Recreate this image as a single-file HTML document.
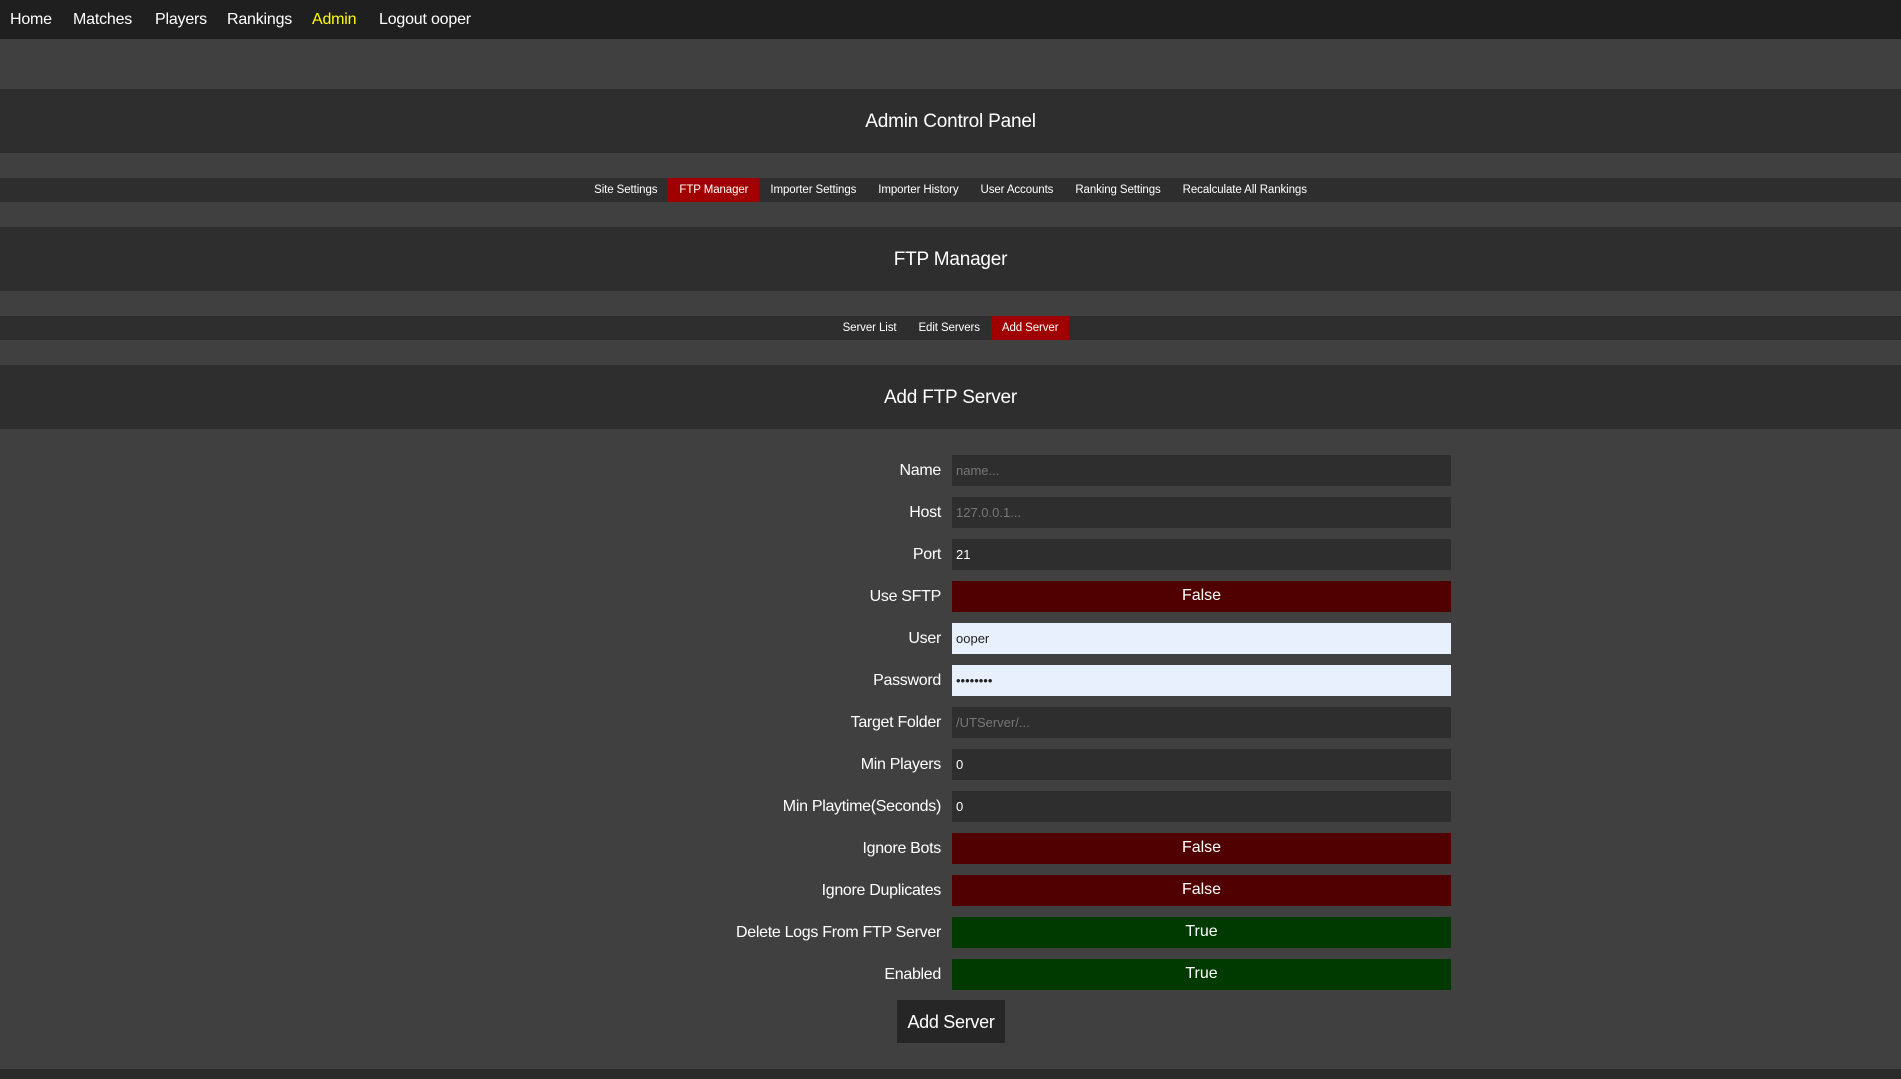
<!DOCTYPE html>
<html><head><meta charset="utf-8"><style>
*{margin:0;padding:0;box-sizing:border-box}
body{width:1901px;height:1079px;background:#404040;font-family:"Liberation Sans",Arial,sans-serif;color:#fff;overflow:hidden;position:relative}
.nav{height:39px;background:#1f1f1f;position:relative}
.nav span{position:absolute;top:11px;font-size:16px;letter-spacing:-0.2px}
.band{position:absolute;left:0;width:1901px;background:#2e2e2e;text-align:center}
.title{height:64px;line-height:66px;font-size:19px;letter-spacing:-0.2px}
.tabs{height:24px;line-height:25px;font-size:11.5px;letter-spacing:-0.1px}
.tabs span{display:inline-block;padding:0 11px;height:24px}
.tabs .on{background:#a00000}
.row{position:absolute;left:0;width:1901px;height:31px}
.lab{position:absolute;right:960px;top:7px;font-size:16px;letter-spacing:-0.3px}
.inp{position:absolute;left:952px;width:499px;height:31px;background:#2e2e2e;font-size:13px;line-height:31px;padding-left:4px;color:#fff}
.ph{color:#777}
.light{background:#e8f0fe;color:#222}
.red{background:#500000;text-align:center;font-size:16px;padding:0;line-height:29px}
.green{background:#003a00;text-align:center;font-size:16px;padding:0;line-height:29px}
.btn{position:absolute;left:897px;top:1000px;width:108px;height:43px;background:#262626;font-size:18px;line-height:45px;text-align:center;letter-spacing:-0.3px}
.foot{position:absolute;left:0;top:1069px;width:1901px;height:10px;background:#2a2a2a}
</style></head><body>
<div class="nav">
<span style="left:10px">Home</span>
<span style="left:73px">Matches</span>
<span style="left:155px">Players</span>
<span style="left:227px">Rankings</span>
<span style="left:312px;color:#ffff00">Admin</span>
<span style="left:379px">Logout ooper</span>
</div>
<div class="band title" style="top:89px">Admin Control Panel</div>
<div class="band tabs" style="top:178px"><span>Site Settings</span><span class="on">FTP Manager</span><span>Importer Settings</span><span>Importer History</span><span>User Accounts</span><span>Ranking Settings</span><span>Recalculate All Rankings</span></div>
<div class="band title" style="top:227px">FTP Manager</div>
<div class="band tabs" style="top:316px"><span>Server List</span><span>Edit Servers</span><span class="on">Add Server</span></div>
<div class="band title" style="top:365px">Add FTP Server</div>

<div class="row" style="top:455px"><div class="lab">Name</div><div class="inp ph">name...</div></div>
<div class="row" style="top:497px"><div class="lab">Host</div><div class="inp ph">127.0.0.1...</div></div>
<div class="row" style="top:539px"><div class="lab">Port</div><div class="inp">21</div></div>
<div class="row" style="top:581px"><div class="lab">Use SFTP</div><div class="inp red">False</div></div>
<div class="row" style="top:623px"><div class="lab">User</div><div class="inp light">ooper</div></div>
<div class="row" style="top:665px"><div class="lab">Password</div><div class="inp light">••••••••</div></div>
<div class="row" style="top:707px"><div class="lab">Target Folder</div><div class="inp ph">/UTServer/...</div></div>
<div class="row" style="top:749px"><div class="lab">Min Players</div><div class="inp">0</div></div>
<div class="row" style="top:791px"><div class="lab">Min Playtime(Seconds)</div><div class="inp">0</div></div>
<div class="row" style="top:833px"><div class="lab">Ignore Bots</div><div class="inp red">False</div></div>
<div class="row" style="top:875px"><div class="lab">Ignore Duplicates</div><div class="inp red">False</div></div>
<div class="row" style="top:917px"><div class="lab">Delete Logs From FTP Server</div><div class="inp green">True</div></div>
<div class="row" style="top:959px"><div class="lab">Enabled</div><div class="inp green">True</div></div>
<div class="btn">Add Server</div>
<div class="foot"></div>
</body></html>
